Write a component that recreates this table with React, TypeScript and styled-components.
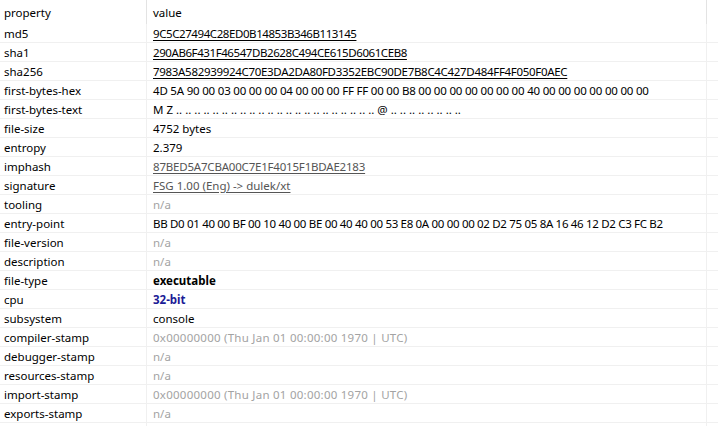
import React from "react";
import styled, { createGlobalStyle } from "styled-components";

const Global = createGlobalStyle`
  html, body { margin: 0; padding: 0; background: #ffffff; }
  body { font-family: "Noto Sans", "Open Sans", sans-serif; font-size: 11.5px; color: #000; }
`;

const Table = styled.div`
  display: grid;
  grid-template-columns: 147px 560px 1fr;
  width: 718px;
  height: 426px;
  grid-auto-rows: 19px;
  grid-template-rows: 24px;
  overflow: hidden;
`;

const HeadCell = styled.div<{ $pad: number; $last?: boolean }>`
  display: flex;
  align-items: center;
  padding-left: ${(p) => p.$pad}px;
  border-right: ${(p) => (p.$last ? "none" : "1px solid #e3e3e3")};
  color: #000;
  white-space: nowrap;
`;

const Cell = styled.div<{ $pad: number; $last?: boolean }>`
  display: flex;
  align-items: center;
  padding-left: ${(p) => p.$pad}px;
  border-bottom: 1px solid #f0f0f0;
  border-right: ${(p) => (p.$last ? "none" : "1px solid #f0f0f0")};
  white-space: nowrap;
  overflow: hidden;
`;

type Kind = "plain" | "link" | "soft" | "na" | "bold" | "cpu" | "gray";

const Value = styled.span<{ $kind: Kind; $ls: number }>`
  color: ${(p) =>
    p.$kind === "na" || p.$kind === "gray"
      ? "#a3a3a3"
      : p.$kind === "soft"
      ? "#555555"
      : p.$kind === "cpu"
      ? "#1b1b96"
      : "#000000"};
  text-decoration: ${(p) => (p.$kind === "link" || p.$kind === "soft" ? "underline" : "none")};
  text-underline-offset: 2px;
  letter-spacing: ${(p) => p.$ls}px;
  font-weight: ${(p) => (p.$kind === "bold" || p.$kind === "cpu" ? 700 : 400)};
`;

const Filler = styled.div`
  border-right: 1px solid #f0f0f0;
`;

const dotsBefore = Array(22).fill("..").join(" ");
const dotsAfter = Array(8).fill("..").join(" ");

const rows: [string, string, Kind, number][] = [
  ["md5", "9C5C27494C28ED0B14853B346B113145", "link", -0.42],
  ["sha1", "290AB6F431F46547DB2628C494CE615D6061CEB8", "link", -0.42],
  ["sha256", "7983A582939924C70E3DA2DA80FD3352EBC90DE7B8C4C427D484FF4F050F0AEC", "link", -0.31],
  ["first-bytes-hex", "4D 5A 90 00 03 00 00 00 04 00 00 00 FF FF 00 00 B8 00 00 00 00 00 00 00 40 00 00 00 00 00 00 00", "plain", -0.2],
  ["first-bytes-text", `M Z ${dotsBefore} @ ${dotsAfter}`, "plain", 0],
  ["file-size", "4752 bytes", "plain", 0],
  ["entropy", "2.379", "plain", 0],
  ["imphash", "87BED5A7CBA00C7E1F4015F1BDAE2183", "soft", -0.2],
  ["signature", "FSG 1.00 (Eng) -> dulek/xt", "soft", 0],
  ["tooling", "n/a", "na", 0],
  ["entry-point", "BB D0 01 40 00 BF 00 10 40 00 BE 00 40 40 00 53 E8 0A 00 00 00 02 D2 75 05 8A 16 46 12 D2 C3 FC B2", "plain", -0.32],
  ["file-version", "n/a", "na", 0],
  ["description", "n/a", "na", 0],
  ["file-type", "executable", "bold", 0],
  ["cpu", "32-bit", "cpu", 0],
  ["subsystem", "console", "plain", 0],
  ["compiler-stamp", "0x00000000 (Thu Jan 01 00:00:00 1970 | UTC)", "gray", 0.25],
  ["debugger-stamp", "n/a", "na", 0],
  ["resources-stamp", "n/a", "na", 0],
  ["import-stamp", "0x00000000 (Thu Jan 01 00:00:00 1970 | UTC)", "gray", 0.25],
  ["exports-stamp", "n/a", "na", 0],
];

export default function App() {
  return (
    <>
      <Global />
      <Table>
        <HeadCell $pad={4}>property</HeadCell>
        <HeadCell $pad={6}>value</HeadCell>
        <HeadCell $pad={0} $last />
        {rows.map(([k, v, kind, ls]) => (
          <React.Fragment key={k}>
            <Cell $pad={4}>{k}</Cell>
            <Cell $pad={6}>
              <Value $kind={kind} $ls={ls}>
                {v}
              </Value>
            </Cell>
            <Cell $pad={0} $last />
          </React.Fragment>
        ))}
        <Filler />
        <Filler />
      </Table>
    </>
  );
}
